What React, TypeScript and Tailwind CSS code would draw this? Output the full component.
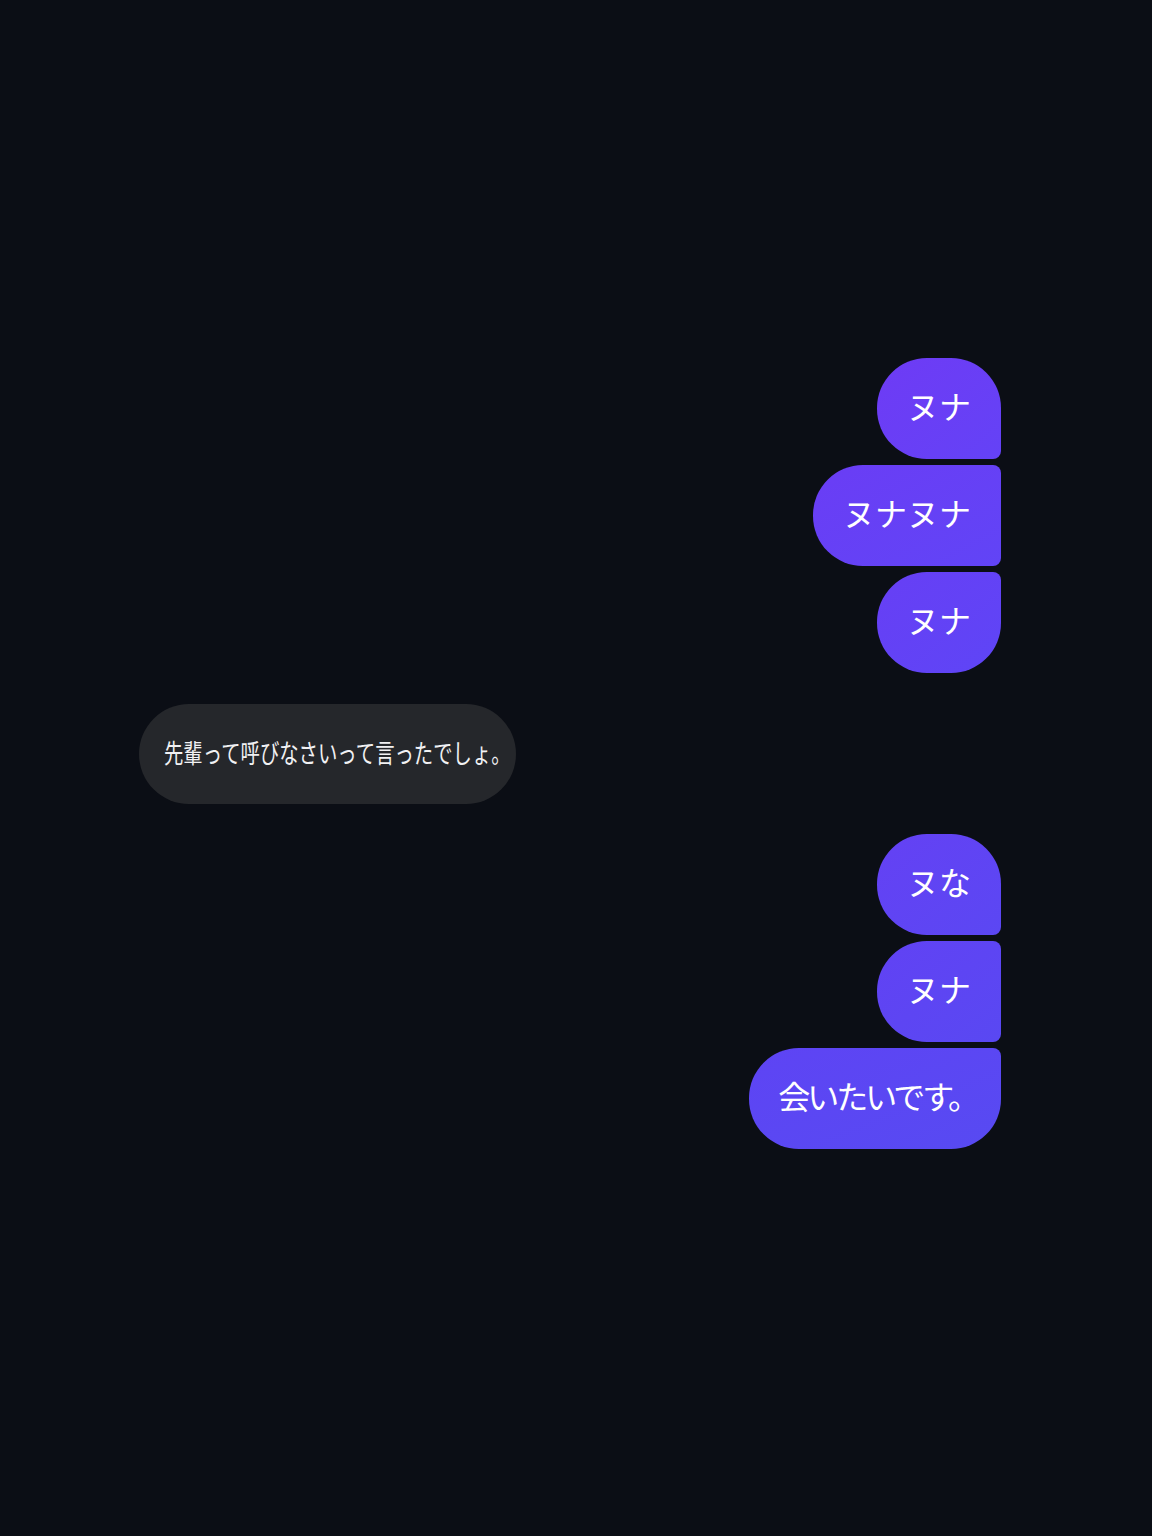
const FONT = '"Noto Sans CJK JP", "Noto Sans", sans-serif';

type Bubble = {
  text: string;
  shape: string;
  tone: string;
  tight?: boolean;
};

const firstGroup: Bubble[] = [
  { text: 'ヌナ', shape: 'rounded-[50px] rounded-br-[8px]', tone: 'from-[#6e3bf5] to-[#6442f6]' },
  { text: 'ヌナヌナ', shape: 'rounded-l-[50px] rounded-r-[8px]', tone: 'from-[#6a3df5] to-[#6144f6]' },
  { text: 'ヌナ', shape: 'rounded-[50px] rounded-tr-[8px]', tone: 'from-[#673ff5] to-[#5e45f6]' },
];

const secondGroup: Bubble[] = [
  { text: 'ヌな', shape: 'rounded-[50px] rounded-br-[8px]', tone: 'from-[#6441f4] to-[#5b47f3]' },
  { text: 'ヌナ', shape: 'rounded-l-[50px] rounded-r-[8px]', tone: 'from-[#6142f4] to-[#5948f2]' },
  { text: '会いたいです。', shape: 'rounded-[50px] rounded-tr-[8px]', tone: 'from-[#5e44f4] to-[#574af2]', tight: true },
];

function SentBubble({ text, shape, tone, tight }: Bubble) {
  return (
    <div
      className={`h-[101px] flex items-center pb-[7px] bg-gradient-to-br ${tone} ${shape} ${
        tight ? 'pl-[29px] pr-[24px]' : 'px-[30px]'
      }`}
    >
      <span
        className={`text-[32px] leading-none text-white ${tight ? 'tracking-[-3px]' : 'tracking-[0px]'}`}
        style={{ fontFamily: FONT }}
      >
        {text}
      </span>
    </div>
  );
}

function SentGroup({ items }: { items: Bubble[] }) {
  return (
    <div className="flex flex-col items-end gap-[6px]">
      {items.map((b, i) => (
        <SentBubble key={i} {...b} />
      ))}
    </div>
  );
}

export default function App() {
  return (
    <div className="w-[1152px] h-[1536px] bg-[#0b0e15] pt-[358px] pl-[139px] pr-[151px]">
      <SentGroup items={firstGroup} />

      <div className="mt-[31px] flex">
        <div className="w-[377px] h-[100px] rounded-[50px] bg-[#25272b] flex items-center pl-[25px] pb-[5px] overflow-hidden">
          <span
            className="inline-block whitespace-nowrap text-[26px] leading-none text-[#f1f1f3] origin-left scale-x-[0.745]"
            style={{ fontFamily: FONT }}
          >
            先輩って呼びなさいって言ったでしょ。
          </span>
        </div>
      </div>

      <div className="mt-[30px]">
        <SentGroup items={secondGroup} />
      </div>
    </div>
  );
}
